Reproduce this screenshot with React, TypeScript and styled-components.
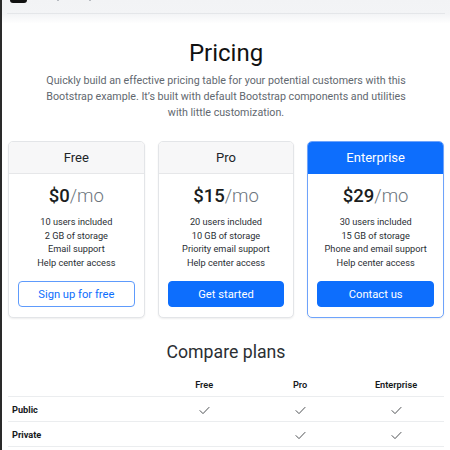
import React from "react";
import styled, { createGlobalStyle } from "styled-components";

const Global = createGlobalStyle`
  html, body { margin: 0; padding: 0; background: #fff; }
  body {
    font-family: Roboto, "Noto Sans", "Liberation Sans", sans-serif;
    color: #212529;
    -webkit-font-smoothing: antialiased;
  }
`;

const Page = styled.div`
  border-left: 2px solid #2a2a2a;
  min-height: 450px;
  box-sizing: border-box;
  overflow: hidden;
`;

const Top = styled.div`
  background: linear-gradient(#f2f3f5 0px, #f3f4f6 14px, #ffffff 24px);
  padding: 0 5px 9px 5px;
`;

const Nav = styled.div`
  height: 13px;
  border-bottom: 1px solid #e4e6e9;
  display: flex;
  align-items: flex-start;
  gap: 30px;
  padding-left: 3px;
`;

const Logo = styled.div`
  width: 17px;
  height: 3px;
  background: #111;
  border-radius: 0 0 3px 3px;
`;

const NavDot = styled.div`
  width: 2px;
  height: 1px;
  background: #b8bcc2;
`;

const Hero = styled.div`
  text-align: center;
  padding: 13px 0 0;
`;

const Title = styled.h1`
  margin: 0;
  font-size: 24px;
  line-height: 34px;
  font-weight: 400;
  color: #111;
`;

const Lead = styled.p`
  margin: 3px auto 0;
  font-size: 10.7px;
  line-height: 16px;
  color: #62686f;
`;

const Cards = styled.div`
  display: grid;
  grid-template-columns: repeat(3, 1fr);
  gap: 13px;
  padding: 0 6px;
  margin-top: 20px;
`;

const Card = styled.div<{ $primary?: boolean }>`
  border: 1px solid ${(p) => (p.$primary ? "#6ea3fb" : "#e3e5e8")};
  border-radius: 5px;
  box-shadow: 0 1px 2px rgba(0, 0, 0, 0.07);
  overflow: hidden;
  background: #fff;
  display: flex;
  flex-direction: column;
`;

const CardHeader = styled.div<{ $primary?: boolean }>`
  height: 31px;
  display: flex;
  align-items: center;
  justify-content: center;
  font-size: 13px;
  font-weight: 400;
  background: ${(p) => (p.$primary ? "#0d6efd" : "#f7f7f8")};
  color: ${(p) => (p.$primary ? "#fff" : "#212529")};
  border-bottom: 1px solid ${(p) => (p.$primary ? "#0d6efd" : "#e6e7e9")};
`;

const CardBody = styled.div`
  padding: 8px 9px 10px;
  text-align: center;
  display: flex;
  flex-direction: column;
  align-items: stretch;
`;

const Price = styled.div`
  font-size: 18.5px;
  line-height: 28px;
  font-weight: 500;
  color: #1a1d20;
`;

const Per = styled.span`
  font-weight: 300;
  color: #6c757d;
`;

const Features = styled.ul`
  list-style: none;
  margin: 5px 0 12px;
  padding: 0;
  font-size: 9.2px;
  line-height: 13.6px;
  color: #2a2e33;
`;

const Button = styled.button<{ $outline?: boolean }>`
  height: 26px;
  border-radius: 4px;
  font-family: inherit;
  font-size: 11.2px;
  font-weight: 400;
  border: 1px solid ${(p) => (p.$outline ? "#5e9bfc" : "#0d6efd")};
  background: ${(p) => (p.$outline ? "#fff" : "#0d6efd")};
  color: ${(p) => (p.$outline ? "#0d6efd" : "#fff")};
  padding: 0;
  cursor: pointer;
`;

const SubTitle = styled.h2`
  margin: 21px 0 0;
  text-align: center;
  font-size: 17.7px;
  line-height: 26px;
  font-weight: 400;
  color: #2b2f33;
`;

const Table = styled.table`
  margin: 7px 6px 0;
  width: calc(100% - 12px);
  border-collapse: collapse;
  font-size: 9.2px;
  table-layout: fixed;
`;

const Th = styled.th<{ $w?: string }>`
  width: ${(p) => p.$w || "auto"};
  font-weight: 600;
  text-align: center;
  height: 24px;
  padding: 0;
  border-bottom: 1px solid #ebedef;
  color: #16191c;
`;

const RowHead = styled.th`
  text-align: left;
  font-weight: 700;
  padding: 0 0 0 4px;
  height: 24px;
  border-bottom: 1px solid #ebedef;
  color: #16191c;
`;

const Td = styled.td`
  text-align: center;
  padding: 0;
  height: 24px;
  border-bottom: 1px solid #ebedef;
`;

const Check = () => (
  <svg width="11" height="9" viewBox="0 0 11 9" style={{ display: "inline-block", verticalAlign: "middle" }}>
    <path d="M1 4.6 L4 7.6 L10 1.4" fill="none" stroke="#3a3d41" strokeWidth="0.9" strokeLinecap="round" strokeLinejoin="round" />
  </svg>
);

const plans = [
  {
    name: "Free",
    price: "$0",
    features: ["10 users included", "2 GB of storage", "Email support", "Help center access"],
    cta: "Sign up for free",
    outline: true,
  },
  {
    name: "Pro",
    price: "$15",
    features: ["20 users included", "10 GB of storage", "Priority email support", "Help center access"],
    cta: "Get started",
  },
  {
    name: "Enterprise",
    price: "$29",
    features: ["30 users included", "15 GB of storage", "Phone and email support", "Help center access"],
    cta: "Contact us",
    primary: true,
  },
];

const rows: { label: string; checks: boolean[] }[] = [
  { label: "Public", checks: [true, true, true] },
  { label: "Private", checks: [false, true, true] },
];

export default function App() {
  return (
    <Page>
      <Global />
      <Top>
        <Nav>
          <Logo />
          <NavDot />
          <NavDot />
        </Nav>
      </Top>
      <Hero>
        <Title>Pricing</Title>
        <Lead>
          Quickly build an effective pricing table for your potential customers with this
          <br />
          Bootstrap example. It’s built with default Bootstrap components and utilities
          <br />
          with little customization.
        </Lead>
      </Hero>
      <Cards>
        {plans.map((p) => (
          <Card key={p.name} $primary={p.primary}>
            <CardHeader $primary={p.primary}>{p.name}</CardHeader>
            <CardBody>
              <Price>
                {p.price}
                <Per>/mo</Per>
              </Price>
              <Features>
                {p.features.map((f) => (
                  <li key={f}>{f}</li>
                ))}
              </Features>
              <Button $outline={p.outline}>{p.cta}</Button>
            </CardBody>
          </Card>
        ))}
      </Cards>
      <SubTitle>Compare plans</SubTitle>
      <Table>
        <thead>
          <tr>
            <Th $w="34%"></Th>
            <Th $w="22%">Free</Th>
            <Th $w="22%">Pro</Th>
            <Th $w="22%">Enterprise</Th>
          </tr>
        </thead>
        <tbody>
          {rows.map((r) => (
            <tr key={r.label}>
              <RowHead>{r.label}</RowHead>
              {r.checks.map((c, i) => (
                <Td key={i}>{c ? <Check /> : null}</Td>
              ))}
            </tr>
          ))}
        </tbody>
      </Table>
    </Page>
  );
}
